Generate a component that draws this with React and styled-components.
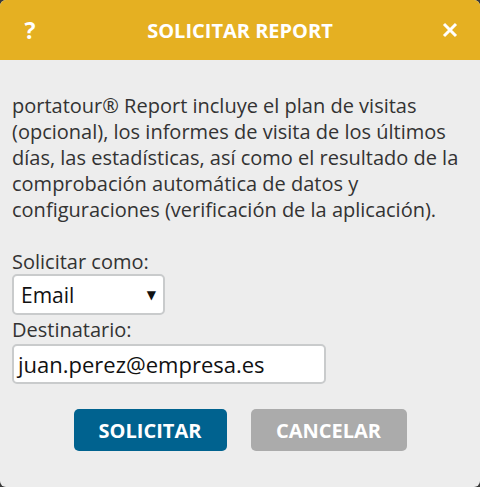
import React from "react";
import styled, { createGlobalStyle } from "styled-components";

const Global = createGlobalStyle`
  html, body { margin: 0; padding: 0; background: #3a3a3a; }
  body { font-family: "Open Sans", "DejaVu Sans", sans-serif; }
  * { box-sizing: border-box; }
`;

const Dialog = styled.div`
  width: 480px;
  height: 487px;
  background: #ededed;
  border-radius: 6px;
  overflow: hidden;
  display: flex;
  flex-direction: column;
`;

const Header = styled.div`
  height: 60px;
  background: #e5b022;
  color: #fff;
  display: grid;
  grid-template-columns: 60px 1fr 60px;
  align-items: center;
  justify-items: center;
  font-weight: 700;
`;

const HeaderIcon = styled.span`
  font-size: 23px;
  line-height: 1;
  display: flex;
  align-items: center;
  justify-content: center;
`;

const Title = styled.div`
  font-size: 20px;
`;

const Body = styled.div`
  padding: 33px 12px 0 12px;
  color: #333;
  font-size: 20px;
`;

const Paragraph = styled.p`
  margin: 0 0 27px 0;
  line-height: 26px;
`;

const Label = styled.div`
  line-height: 24px;
  font-size: 20px;
  color: #333;
  margin-top: ${(p) => p.$mt || 0}px;
  margin-bottom: ${(p) => p.$mb || 0}px;
`;

const SelectBox = styled.div`
  width: 153px;
  height: 41px;
  background: #fff;
  border: 2px solid #c9cbcc;
  border-radius: 5px;
  display: flex;
  align-items: center;
  justify-content: space-between;
  padding: 0 7px 0 7px;
  font-size: 21px;
  color: #111;
`;

const Arrow = styled.span`
  font-size: 12px;
  color: #111;
`;

const Input = styled.div`
  width: 314px;
  height: 40px;
  background: #fff;
  border: 2px solid #c9cbcc;
  border-radius: 5px;
  display: flex;
  align-items: center;
  padding: 0 4px;
  font-size: 22px;
  color: #111;
`;

const Buttons = styled.div`
  display: flex;
  justify-content: center;
  gap: 24px;
  margin-top: 25px;
`;

const Button = styled.button`
  width: ${(p) => p.$w}px;
  height: 42px;
  border: none;
  border-radius: 5px;
  background: ${(p) => p.$bg};
  color: #fff;
  font-family: "Open Sans", "DejaVu Sans", sans-serif;
  font-weight: 700;
  font-size: 20px;
  padding: 0;
`;

export default function App() {
  return (
    <>
      <Global />
      <Dialog>
        <Header>
          <HeaderIcon>?</HeaderIcon>
          <Title>SOLICITAR REPORT</Title>
          <HeaderIcon>
            <svg width="16" height="16" viewBox="0 0 16 16">
              <path d="M2 2 L14 14 M14 2 L2 14" stroke="#fff" strokeWidth="3" strokeLinecap="butt" />
            </svg>
          </HeaderIcon>
        </Header>
        <Body>
          <Paragraph>
            portatour® Report incluye el plan de visitas (opcional), los informes de visita de los últimos días, las estadísticas, así como el resultado de la comprobación automática de datos y configuraciones (verificación de la aplicación).
          </Paragraph>
          <Label>Solicitar como:</Label>
          <SelectBox>
            <span>Email</span>
            <Arrow>▼</Arrow>
          </SelectBox>
          <Label $mt={3} $mb={2}>Destinatario:</Label>
          <Input>juan.perez@empresa.es</Input>
          <Buttons>
            <Button $w={153} $bg="#00628f">SOLICITAR</Button>
            <Button $w={156} $bg="#ababab">CANCELAR</Button>
          </Buttons>
        </Body>
      </Dialog>
    </>
  );
}
